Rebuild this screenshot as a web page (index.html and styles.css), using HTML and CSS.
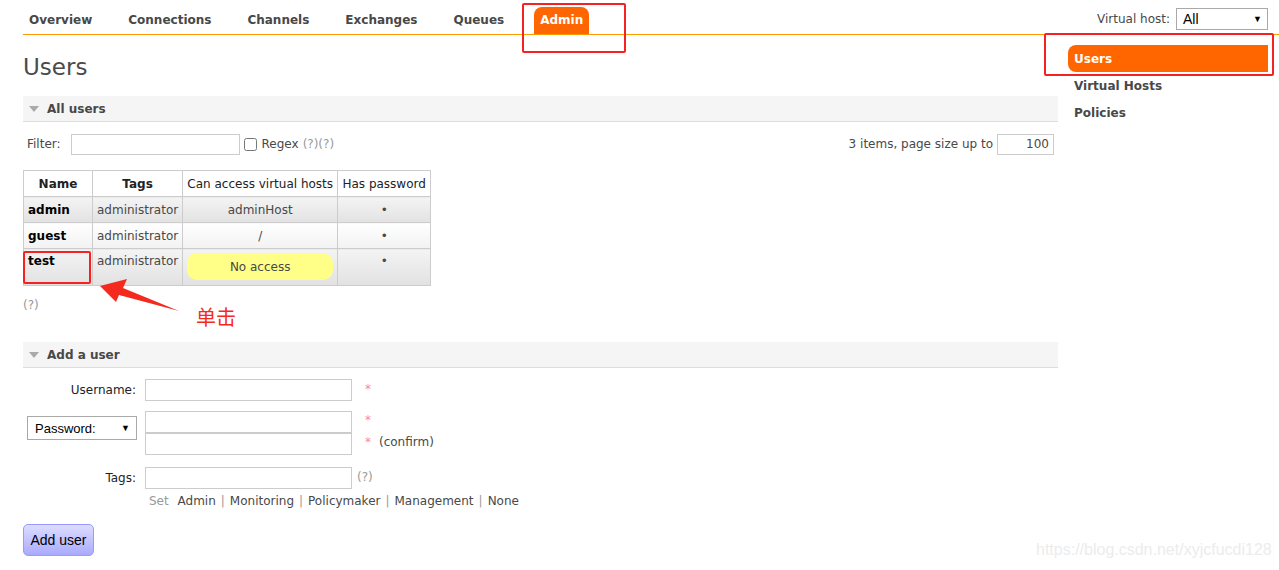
FILE: index.html
```html
<!DOCTYPE html>
<html lang="en">
<head>
    <meta charset="UTF-8">
    <title>RabbitMQ Management: Users</title>
    <link rel="stylesheet" href="styles.css">
</head>
<body>
    <div class="header">
        <ul class="tabs">
            <li><a href="#">Overview</a></li>
            <li><a href="#">Connections</a></li>
            <li><a href="#">Channels</a></li>
            <li><a href="#">Exchanges</a></li>
            <li><a href="#">Queues</a></li>
            <li class="selected"><a href="#">Admin</a></li>
        </ul>
        <div class="vhost">
            <span>Virtual host:</span>
            <div class="fake-select vhost-select"><span>All</span><span class="arrow">▼</span></div>
        </div>
    </div>

    <div class="layout">
        <div class="main">
            <h1>Users</h1>

            <div class="section">
                <h2><span class="tri"></span>All users</h2>
                <div class="filter-row">
                    <div class="filter-left">
                        <label>Filter:</label>
                        <input type="text" class="filter-input">
                        <input type="checkbox" class="regex-check">
                        <span>Regex</span>
                        <span class="help">(?)(?)</span>
                    </div>
                    <div class="filter-right">
                        <span>3 items, page size up to</span>
                        <input type="text" class="page-size" value="100">
                    </div>
                </div>

                <table class="list">
                    <thead>
                        <tr>
                            <th class="c-name bold">Name</th>
                            <th class="c-tags bold">Tags</th>
                            <th class="c-vhosts">Can access virtual hosts</th>
                            <th class="c-pass">Has password</th>
                        </tr>
                    </thead>
                    <tbody>
                        <tr class="alt1">
                            <td class="name">admin</td>
                            <td>administrator</td>
                            <td class="c">adminHost</td>
                            <td class="c">•</td>
                        </tr>
                        <tr class="alt2">
                            <td class="name">guest</td>
                            <td>administrator</td>
                            <td class="c">/</td>
                            <td class="c">•</td>
                        </tr>
                        <tr class="alt1 top">
                            <td class="name">test</td>
                            <td>administrator</td>
                            <td class="c"><div class="warning">No access</div></td>
                            <td class="c">•</td>
                        </tr>
                    </tbody>
                </table>
                <p class="help help-under">(?)</p>
            </div>

            <div class="section">
                <h2><span class="tri"></span>Add a user</h2>
                <div class="form">
                    <label class="lbl">Username:</label>
                    <input type="text" class="field">
                    <span class="mand">*</span>

                    <div class="lbl"><div class="fake-select pw-select"><span>Password:</span><span class="arrow">▼</span></div></div>
                    <div class="pw-fields">
                        <input type="text" class="field">
                        <input type="text" class="field">
                    </div>
                    <div class="pw-notes">
                        <span class="mand">*</span>
                        <span><span class="mand">*</span><span class="confirm">(confirm)</span></span>
                    </div>

                    <label class="lbl tags-row">Tags:</label>
                    <input type="text" class="field tags-row">
                    <span class="help tags-help tags-row">(?)</span>

                    <span></span>
                    <div class="set-line">
                        <span class="help">Set</span>
                        <a href="#">Admin</a><span class="sep">|</span><a href="#">Monitoring</a><span class="sep">|</span><a href="#">Policymaker</a><span class="sep">|</span><a href="#">Management</a><span class="sep">|</span><a href="#">None</a>
                    </div>
                    <span></span>
                </div>
                <button class="add-btn">Add user</button>
            </div>
        </div>

        <ul class="sidebar">
            <li class="selected"><a href="#">Users</a></li>
            <li><a href="#">Virtual Hosts</a></li>
            <li><a href="#">Policies</a></li>
        </ul>
    </div>

    <!-- screenshot annotations -->
    <div class="mark mark-admin"></div>
    <div class="mark mark-users"></div>
    <div class="mark mark-test"></div>
    <svg class="arrow-note" width="90" height="40" viewBox="95 278 90 40">
        <polygon points="100,286 127,279 123,288 179,311 119,295 116,302" fill="#f42a1e"/>
    </svg>
    <div class="note">单击</div>
    <div class="watermark">https://blog.csdn.net/xyjcfucdi128</div>
</body>
</html>
```

FILE: styles.css
```css
* {
    box-sizing: border-box;
}

body {
    margin: 0;
    padding: 0 11px 0 23px;
    font-family: 'DejaVu Sans', Verdana, sans-serif;
    font-size: 12px;
    color: #484848;
    background: #fff;
}

a {
    color: #484848;
    text-decoration: none;
}

/* top navigation */
.header {
    display: flex;
    justify-content: space-between;
    align-items: flex-start;
    padding-top: 7px;
    border-bottom: 1px solid #f90;
    margin-right: -11px;
    padding-right: 11px;
}

.tabs {
    display: flex;
    list-style: none;
    margin: 0;
    padding: 0;
}

.tabs li {
    margin-right: 24px;
}

.tabs a {
    display: block;
    height: 27px;
    line-height: 27px;
    padding: 0 6px;
    font-weight: bold;
    border-radius: 8px 8px 0 0;
}

.tabs li.selected a {
    background: #f60;
    color: #fff;
}

.vhost {
    display: flex;
    align-items: center;
    gap: 6px;
    margin-top: 1px;
    font-size: 12px;
}

.fake-select {
    display: flex;
    justify-content: space-between;
    align-items: center;
    background: #fff;
    border: 1px solid #a9a9a9;
    font-family: 'Liberation Sans', Arial, sans-serif;
    color: #000;
}

.fake-select .arrow {
    font-size: 9px;
}

.vhost-select {
    width: 92px;
    height: 22px;
    padding: 0 5px 0 6px;
    font-size: 14px;
}

/* page body */
.layout {
    display: flex;
}

.main {
    width: 1035px;
}

.sidebar {
    list-style: none;
    width: 200px;
    margin: 10px 0 0 10px;
    padding: 0;
}

.sidebar a {
    display: block;
    height: 27px;
    line-height: 28px;
    padding: 0 6px;
    font-weight: bold;
    border-radius: 8px 0 0 8px;
}

.sidebar li.selected a {
    background: #f60;
    color: #fff;
}

h1 {
    margin: 18px 0 15px;
    font-size: 23px;
    line-height: 28px;
    font-weight: normal;
    color: #4a4a4a;
}

.section h2 {
    display: flex;
    align-items: center;
    height: 26px;
    margin: 0;
    padding-left: 6px;
    background: #f5f5f5;
    border-bottom: 1px solid #ddd;
    font-size: 12px;
    font-weight: bold;
}

.tri {
    width: 0;
    height: 0;
    margin-right: 8px;
    border-left: 5px solid transparent;
    border-right: 5px solid transparent;
    border-top: 6px solid #aaa;
}

.help {
    color: #999;
}

.filter-row {
    display: flex;
    justify-content: space-between;
    align-items: center;
    margin: 11px 4px 15px 4px;
    height: 22px;
}

.filter-left,
.filter-right {
    display: flex;
    align-items: center;
}

.filter-input {
    width: 169px;
    height: 21px;
    margin: 0 4px 0 10px;
    border: 1px solid #ccc;
}

.regex-check {
    width: 13px;
    height: 13px;
    margin: 0 5px 0 0;
}

.filter-left .help {
    margin-left: 4px;
}

.page-size {
    width: 57px;
    height: 21px;
    margin-left: 4px;
    border: 1px solid #ccc;
    text-align: right;
    font-family: inherit;
    font-size: 12px;
    color: #484848;
    padding-right: 4px;
}

/* users table */
table.list {
    border-collapse: collapse;
}

table.list th,
table.list td {
    border: 1px solid #ccc;
    height: 26px;
    padding: 0 4px;
    white-space: nowrap;
}

table.list th {
    font-weight: normal;
    color: #222;
}

table.list th.bold {
    font-weight: bold;
}

.c-name { width: 69px; }
.c-tags { width: 90px; }
.c-vhosts { width: 155px; }
.c-pass { width: 93px; }

td.name {
    font-weight: bold;
    color: #000;
}

td.c {
    text-align: center;
}

tr.alt1 td {
    background: linear-gradient(#f4f4f4, #e2e2e2);
}

tr.alt2 td {
    background: linear-gradient(#fff, #f2f2f2);
}

tr.top td {
    vertical-align: top;
    padding-top: 5px;
    height: 37px;
}

tr.top td:nth-child(3) {
    padding-top: 4px;
}

.warning {
    height: 27px;
    line-height: 28px;
    background: #ff8;
    border-radius: 10px;
}

.help-under {
    margin: 12px 0 30px;
    line-height: 14px;
}

/* add user form */
.form {
    display: grid;
    grid-template-columns: 113px 207px auto;
    column-gap: 9px;
    row-gap: 10px;
    margin-top: 11px;
    align-items: center;
}

.lbl {
    display: flex;
    justify-content: flex-end;
    color: #222;
}

.field {
    width: 207px;
    height: 22px;
    border: 1px solid #ccc;
    display: block;
}

.tags-row {
    margin-top: 2px;
}

.mand {
    color: #f88;
    margin-left: 4px;
}

.form > .mand {
    align-self: start;
    margin-top: 3px;
}

.confirm {
    margin-left: 8px;
}

.pw-select {
    width: 110px;
    height: 24px;
    padding: 0 6px 0 7px;
    font-size: 13px;
    align-self: flex-start;
}

.form .lbl:has(.pw-select) {
    align-self: start;
    margin-top: 5px;
    margin-right: -1px;
}

.pw-notes {
    display: flex;
    flex-direction: column;
    gap: 8px;
}

.pw-notes > span:first-child {
    margin-top: -4px;
}

.form .tags-help {
    margin-left: -4px;
    margin-top: 0;
}

.set-line {
    margin-top: -5px;
    padding-left: 4px;
    white-space: nowrap;
    color: #999;
}

.set-line .help {
    margin-right: 5px;
}

.sep {
    margin: 0 5px;
}

.add-btn {
    display: block;
    margin-top: 16px;
    width: 71px;
    height: 32px;
    padding: 0;
    border: 1px solid #99f;
    border-radius: 5px;
    background: linear-gradient(#ddf, #aaf);
    font-family: 'Liberation Sans', Arial, sans-serif;
    font-size: 14px;
    color: #000;
}

/* screenshot annotations */
.mark {
    position: absolute;
    border: 2px solid #f52222;
    border-radius: 2px;
}

.mark-admin {
    left: 522px;
    top: 3px;
    width: 104px;
    height: 50px;
}

.mark-users {
    left: 1044px;
    top: 33px;
    width: 230px;
    height: 43px;
}

.mark-test {
    left: 23px;
    top: 251px;
    width: 68px;
    height: 33px;
}

.arrow-note {
    position: absolute;
    left: 95px;
    top: 278px;
}

.note {
    position: absolute;
    left: 196px;
    top: 303px;
    font-family: 'Noto Sans CJK SC', sans-serif;
    font-size: 20px;
    line-height: 28px;
    color: #f42a1e;
}

.watermark {
    position: absolute;
    left: 1036px;
    top: 541px;
    font-family: 'Liberation Sans', Arial, sans-serif;
    font-size: 16px;
    color: #ececec;
}
```
